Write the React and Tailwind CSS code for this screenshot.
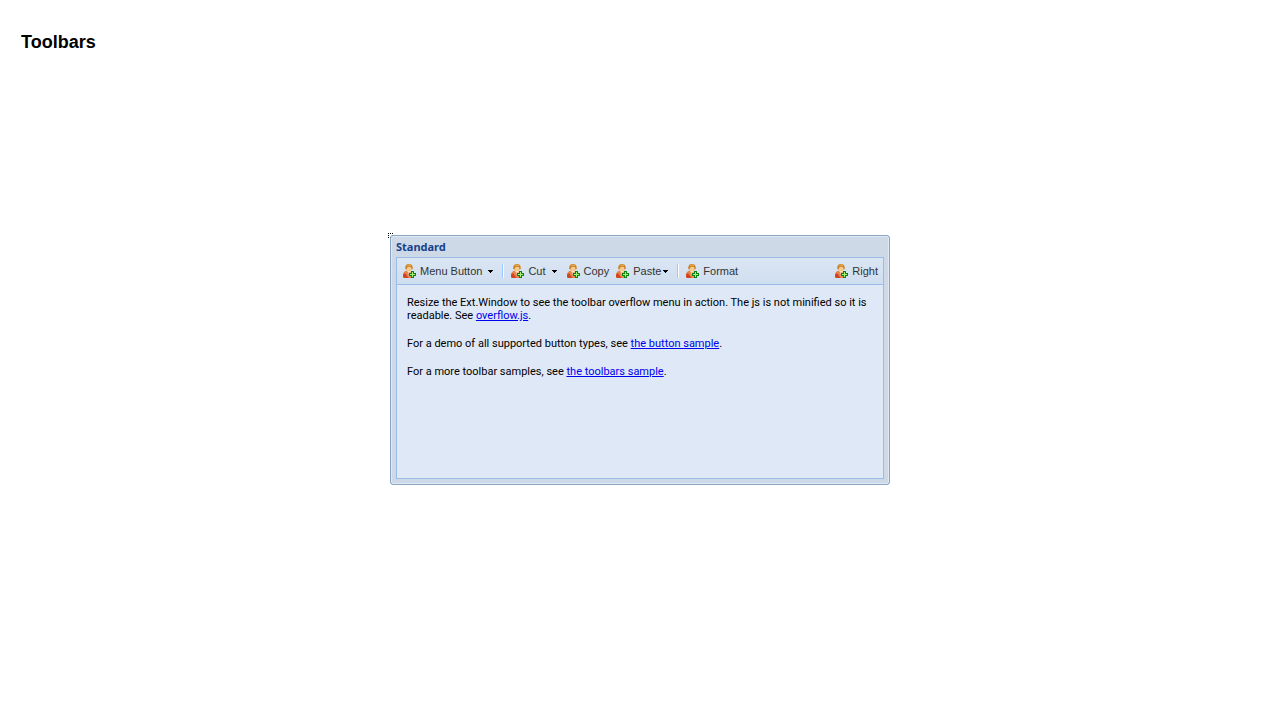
import React from 'react';

function UserAddIcon() {
  return (
    <svg width="16" height="16" viewBox="0 0 16 16" className="shrink-0" aria-hidden="true">
      <path d="M1 14.200V12C1 9.500 2.500 7.700 5 7.500h3.500C11 7.700 12 9.500 12 11.500v2.700l-1.300.8H2.500z" fill="#e8834a" />
      <path d="M1 14.200V12c.3-1.200 1.300-1.900 2.500-1.300L6.500 15h-4z" fill="#d0451f" />
      <path d="M5 7.600h4L7.500 13z" fill="#fbe6d2" />
      <path d="M6.600 9h1l.5 3.500-.8 1.500-.9-1.500z" fill="#e2a07a" />
      <path d="M4 5C4 2.900 5 1.900 7 1.900S10 3.100 10 5 9 8.300 7 8.300 4 7 4 5z" fill="#f8c98a" />
      <path d="M3.400 6.300C2.800 3 4.200 1 7 1s4.200 1.900 3.700 5.100l-1.200.3-.5-2.400-2.900-.3-1.200 1.200-.3 1.500z" fill="#c98227" />
      <path d="M5.200 2.800C6 2 7.800 1.800 9 2.500" stroke="#edb85c" fill="none" />
      <path d="M9 8h3v2h2v3h-2v2H9v-2H7v-3h2z" fill="#0b8212" />
      <path d="M10.500 9v5M8 11.500h5" stroke="#a8f37c" />
    </svg>
  );
}

function Arrow({ className = '' }) {
  return (
    <svg width="5" height="3" viewBox="0 0 5 3" shapeRendering="crispEdges" className={className} aria-hidden="true">
      <path d="M0 0h5v1H4v1H3v1H2V2H1V1H0z" fill="#000" />
    </svg>
  );
}

function ToolButton({ label, arrow }) {
  return (
    <button type="button" className="flex h-[22px] shrink-0 items-center px-[3px] whitespace-nowrap" aria-haspopup={arrow ? 'menu' : undefined}>
      <UserAddIcon />
      <span className="ml-[2px]">{label}</span>
      {arrow && <Arrow className={arrow === 'split' ? 'mr-[3px] ml-[2px]' : 'mr-[3px] ml-[6px]'} />}
    </button>
  );
}

function Separator() {
  return <span className="mx-[3px] h-[14px] w-[2px] shrink-0 border-r border-l border-r-white border-l-[#98c8ff]" />;
}

function Link({ children }) {
  return <a href="#" className="text-[#0000ee] underline">{children}</a>;
}

export default function App() {
  return (
    <main className="grid min-h-screen bg-white text-black">
      <h1 className="col-start-1 row-start-1 self-start p-[21px] pt-[32px] font-['Liberation_Sans',Arial,sans-serif] text-[18px] leading-[21px] font-bold">
        Toolbars
      </h1>
      <div className="relative col-start-1 row-start-1 w-full max-w-[500px] place-self-center">
        <span className="absolute -top-[2px] -left-[2px] size-[5px] border border-dotted border-black" />
        <section className="relative flex min-h-[250px] flex-col rounded-[3px] border border-[#8ba4c6] bg-[#ced9e7] px-[5px] pb-[5px] shadow-[inset_0_0_0_1px_#dfe8f3]">
          <h2 className="pt-[4px] pb-[3px] font-['Noto_Sans',sans-serif] text-[11px] leading-[14px] font-bold text-[#15428b]">
            Standard
          </h2>
          <div className="flex grow flex-col border border-[#99bce8] bg-[#dfe8f6]">
            <div role="toolbar" aria-label="Standard" className="flex h-[27px] items-center border-b border-[#99bce8] bg-linear-to-b from-[#dce6f3] to-[#cfdef0] px-[2px] font-['Liberation_Sans',Arial,sans-serif] text-[11px] text-[#333333]">
              <ToolButton label="Menu Button" arrow="menu" />
              <Separator />
              <ToolButton label="Cut" arrow="menu" />
              <ToolButton label="Copy" />
              <ToolButton label="Paste" arrow="split" />
              <Separator />
              <ToolButton label="Format" />
              <span className="grow" />
              <ToolButton label="Right" />
            </div>
            <div className="flex flex-col gap-[15px] px-[10px] pt-[11px] pb-[10px] font-['Roboto',sans-serif] text-[11px] leading-[13px]">
              <p>
                Resize the Ext.Window to see the toolbar overflow menu in action. The js is not minified so it is readable. See <Link>overflow.js</Link>.
              </p>
              <p>For a demo of all supported button types, see <Link>the button sample</Link>.</p>
              <p>For a more toolbar samples, see <Link>the toolbars sample</Link>.</p>
            </div>
          </div>
        </section>
      </div>
    </main>
  );
}
